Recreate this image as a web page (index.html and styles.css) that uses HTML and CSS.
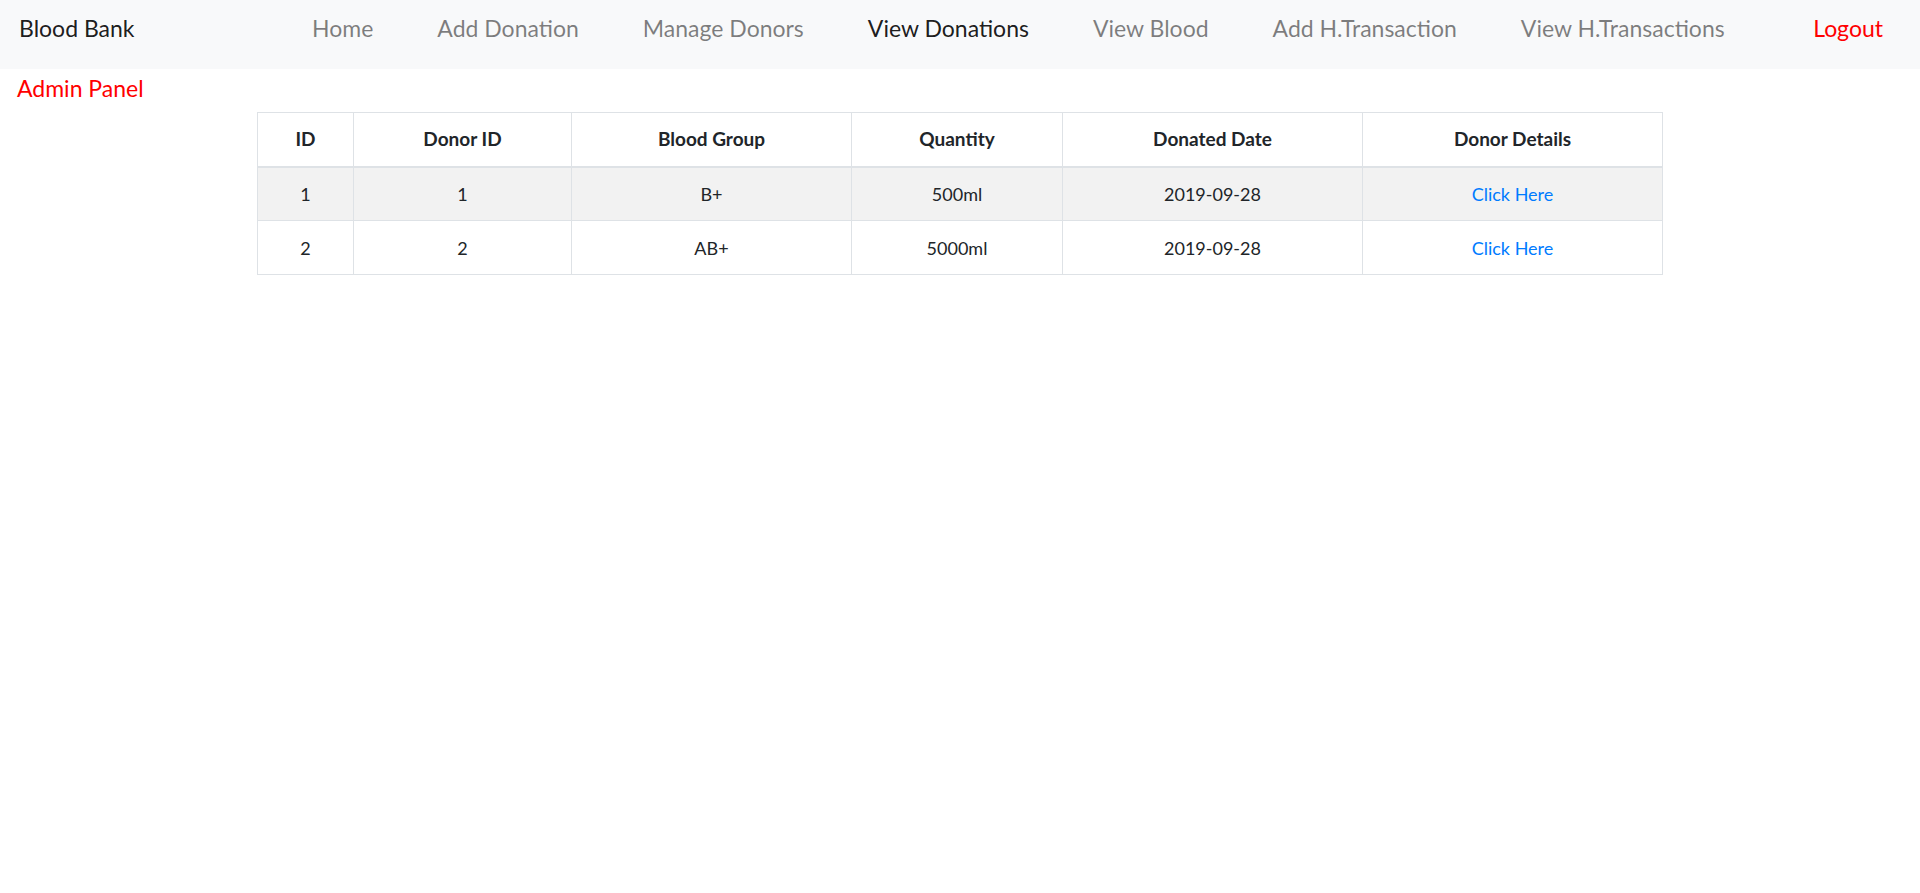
FILE: index.html
```html
<!DOCTYPE html>
<html lang="en">
<head>
<meta charset="utf-8">
<title>Blood Bank - View Donations</title>
<link rel="stylesheet" href="styles.css">
</head>
<body>
<nav class="navbar">
  <a class="brand" href="#">Blood Bank</a>
  <ul class="nav-links">
    <li><a class="nav-link" href="#">Home</a></li>
    <li><a class="nav-link" href="#">Add Donation</a></li>
    <li><a class="nav-link" href="#">Manage Donors</a></li>
    <li><a class="nav-link active" href="#">View Donations</a></li>
    <li><a class="nav-link" href="#">View Blood</a></li>
    <li><a class="nav-link" href="#">Add H.Transaction</a></li>
    <li><a class="nav-link" href="#">View H.Transactions</a></li>
  </ul>
  <a class="logout" href="#">Logout</a>
</nav>
<div class="panel-title">Admin Panel</div>
<table class="data-table">
  <colgroup>
    <col class="c-id">
    <col class="c-donor">
    <col class="c-group">
    <col class="c-qty">
    <col class="c-date">
    <col class="c-details">
  </colgroup>
  <thead>
    <tr>
      <th>ID</th>
      <th>Donor ID</th>
      <th>Blood Group</th>
      <th>Quantity</th>
      <th>Donated Date</th>
      <th>Donor Details</th>
    </tr>
  </thead>
  <tbody>
    <tr class="striped">
      <td>1</td>
      <td>1</td>
      <td>B+</td>
      <td>500ml</td>
      <td>2019-09-28</td>
      <td><a class="details-link" href="#">Click Here</a></td>
    </tr>
    <tr>
      <td>2</td>
      <td>2</td>
      <td>AB+</td>
      <td>5000ml</td>
      <td>2019-09-28</td>
      <td><a class="details-link" href="#">Click Here</a></td>
    </tr>
  </tbody>
</table>
</body>
</html>
```

FILE: styles.css
```css
* { box-sizing: border-box; }

html, body {
  margin: 0;
  padding: 0;
  background: #ffffff;
  font-family: Lato, "Open Sans", "Liberation Sans", sans-serif;
  color: #212529;
}

a { text-decoration: none; }

.navbar {
  display: flex;
  align-items: flex-start;
  height: 69px;
  background: #f8f9fa;
  padding: 13px 37px 0 19px;
}

.brand {
  flex: 0 0 293px;
  font-size: 23px;
  line-height: 30px;
  color: rgba(0, 0, 0, 0.9);
}

.nav-links {
  display: flex;
  gap: 64px;
  list-style: none;
  margin: 0;
  padding: 0;
}

.nav-link {
  display: block;
  font-size: 23px;
  line-height: 30px;
  color: rgba(0, 0, 0, 0.5);
}

.nav-link.active {
  color: rgba(0, 0, 0, 0.9);
}

.logout {
  margin-left: auto;
  font-size: 23px;
  line-height: 30px;
  color: #ff0000;
}

.panel-title {
  color: #ff0000;
  font-size: 23px;
  line-height: 24px;
  padding: 7px 0 0 17px;
  height: 43px;
}

.data-table {
  width: 1405px;
  margin: 0 auto;
  border-collapse: collapse;
  table-layout: fixed;
  font-size: 18px;
  text-align: center;
}

.c-id { width: 96px; }
.c-donor { width: 218px; }
.c-group { width: 280px; }
.c-qty { width: 211px; }
.c-date { width: 300px; }
.c-details { width: 300px; }

.data-table th,
.data-table td {
  border: 1px solid #dee2e6;
  padding: 0 12px;
  height: 54px;
  line-height: 24px;
  vertical-align: middle;
}

.data-table th {
  font-size: 19px;
  font-weight: 700;
  color: #212529;
  border-bottom: 2px solid #dee2e6;
}

.data-table tr.striped td {
  background: #f2f2f2;
}

.details-link {
  color: #007bff;
}
```
